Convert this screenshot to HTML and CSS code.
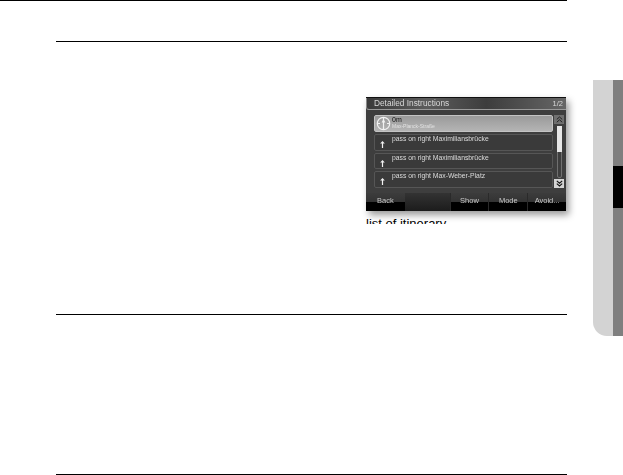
FILE: index.html
```html
<!DOCTYPE html>
<html lang="en">
<head>
    <meta charset="UTF-8">
    <title>list of itinerary</title>
    <link rel="stylesheet" href="styles.css">
</head>
<body>
    <div class="page">
        <div class="rule rule-top"></div>
        <div class="rule rule-sub"></div>

        <div class="figure-row">
            <div class="figure">
                <div class="device">
                    <div class="device-title">
                        <span>Detailed Instructions</span>
                        <span class="pager">1/2</span>
                    </div>
                    <div class="device-body">
                        <div class="list">
                            <div class="item item-active">
                                <svg class="compass" width="15" height="15" viewBox="0 0 15 15">
                                    <circle cx="7.5" cy="7.5" r="6.2" fill="none" stroke="#f2f2f2" stroke-width="1.2"/>
                                    <path d="M7.5 1.5V13.5M1.5 7.5H4M11 7.5H13.5" stroke="#f2f2f2" stroke-width="1.2"/>
                                    <path d="M7.5 3L5.6 6.5H9.4Z" fill="#f2f2f2"/>
                                </svg>
                                <div class="item-text">
                                    <div class="item-dist">0m</div>
                                    <div class="item-street">Max-Planck-Straße</div>
                                </div>
                            </div>
                            <div class="item">
                                <svg class="arrow" width="5" height="7" viewBox="0 0 5 7"><path d="M2.5 0L4.8 2.6H3.1V7H1.9V2.6H.2Z" fill="#f0f0f0"/></svg>
                                <div class="item-label">pass on right Maximiliansbrücke</div>
                            </div>
                            <div class="item">
                                <svg class="arrow" width="5" height="7" viewBox="0 0 5 7"><path d="M2.5 0L4.8 2.6H3.1V7H1.9V2.6H.2Z" fill="#f0f0f0"/></svg>
                                <div class="item-label">pass on right Maximiliansbrücke</div>
                            </div>
                            <div class="item">
                                <svg class="arrow" width="5" height="7" viewBox="0 0 5 7"><path d="M2.5 0L4.8 2.6H3.1V7H1.9V2.6H.2Z" fill="#f0f0f0"/></svg>
                                <div class="item-label">pass on right Max-Weber-Platz</div>
                            </div>
                        </div>
                        <div class="scroll">
                            <div class="scroll-btn scroll-up">
                                <svg width="7" height="7" viewBox="0 0 7 7"><path d="M.8 3.4L3.5 1L6.2 3.4M.8 6.2L3.5 3.8L6.2 6.2" fill="none" stroke="#222" stroke-width="1"/></svg>
                            </div>
                            <div class="scroll-track"><div class="scroll-thumb"></div></div>
                            <div class="scroll-btn scroll-down">
                                <svg width="7" height="7" viewBox="0 0 7 7"><path d="M.8 .8L3.5 3.2L6.2 .8M.8 3.6L3.5 6L6.2 3.6" fill="none" stroke="#111" stroke-width="1.1"/></svg>
                            </div>
                        </div>
                    </div>
                    <div class="device-foot">
                        <div class="soft-btn soft-back">Back</div>
                        <div class="soft-gap"></div>
                        <div class="soft-btn">Show</div>
                        <div class="soft-btn">Mode</div>
                        <div class="soft-btn">Avoid...</div>
                    </div>
                </div>
                <div class="caption">list of itinerary</div>
            </div>
        </div>

        <div class="rule rule-mid"></div>
        <div class="rule rule-end"></div>
    </div>

    <div class="side-tab">
        <div class="side-light"></div>
        <div class="side-dark"><div class="side-mark"></div></div>
    </div>
</body>
</html>
```

FILE: styles.css
```css
html, body {
    margin: 0;
    padding: 0;
    background-color: #ffffff;
    overflow: hidden;
}
body {
    font-family: "Liberation Sans", Arial, sans-serif;
    height: 475px;
}
.page {
    display: flex;
    flex-direction: column;
    width: 567px;
    height: 475px;
}
.rule {
    height: 1px;
    background-color: #000000;
    flex: none;
}
.rule-sub {
    margin-top: 40px;
    margin-left: 56px;
}
.rule-mid {
    margin-top: 90px;
    margin-left: 56px;
}
.rule-end {
    margin-top: 159px;
    margin-left: 56px;
}

.figure-row {
    display: flex;
    justify-content: flex-end;
    margin-top: 55px;
    height: 127px;
    flex: none;
}
.figure {
    width: 201px;
    height: 127px;
}
.device {
    width: 200px;
    height: 114px;
    display: flex;
    flex-direction: column;
    background-color: #3e3e3e;
    color: #e4e4e4;
    box-shadow: 3px 4px 7px rgba(0,0,0,0.4);
    border-top: 1px solid #111;
    box-sizing: border-box;
}
.device-title {
    display: flex;
    justify-content: space-between;
    align-items: center;
    height: 10px;
    padding: 0 3px 1px 7px;
    font-size: 8.3px;
    color: #d8d8d8;
    background: linear-gradient(90deg, #3a3a3a, #5c5c5c 30%, #3d3d3d 60%, #666666);
    border-bottom: 1px solid #9a9a9a;
    border-left: 1px solid #8a8a8a;
    border-bottom-left-radius: 3px;
    flex: none;
    filter: blur(0.4px);
}
.pager {
    font-size: 7.5px;
}
.device-body {
    display: flex;
    flex: 1;
    padding: 5px 2px 5px 8px;
    gap: 1px;
    min-height: 0;
}
.list {
    display: flex;
    flex-direction: column;
    gap: 2px;
    width: 179px;
}
.item {
    display: flex;
    height: 16px;
    align-items: flex-start;
    border: 1px solid #565656;
    border-radius: 2px;
    box-sizing: border-box;
    flex: 1;
    background-color: #3a3a3a;
    filter: blur(0.4px);
}
.item-active {
    background: linear-gradient(#9a9a9a, #b4b4b4);
    border-color: #c4c4c4;
    color: #111;
}
.compass {
    margin: 0 1px 0 1px;
    flex: none;
}
.item-dist {
    font-size: 7px;
    line-height: 7px;
    color: #111111;
}
.item-street {
    font-size: 5px;
    line-height: 7px;
    color: #e2e2e2;
}
.arrow {
    margin: 6px 7px 0 5px;
    flex: none;
}
.item-label {
    font-size: 6.8px;
    line-height: 7px;
    color: #dcdcdc;
}
.scroll {
    display: flex;
    flex-direction: column;
    align-items: center;
    width: 10px;
    flex: none;
}
.scroll-btn {
    width: 10px;
    height: 9px;
    display: flex;
    align-items: center;
    justify-content: center;
    flex: none;
}
.scroll-up {
    background-color: #6f6f6f;
}
.scroll-down {
    background-color: #d4d4d4;
}
.scroll-track {
    flex: 1;
    width: 5px;
    margin: 2px 0 1px;
    border: 1px solid #707070;
    border-radius: 2px;
    box-sizing: border-box;
}
.scroll-thumb {
    height: 26px;
    margin: -1px;
    background-color: #e6e6e6;
}
.device-foot {
    display: flex;
    height: 18px;
    flex: none;
    background-color: #2a2a2a;
}
.soft-btn {
    width: 38px;
    margin-left: 1px;
    font-size: 7.5px;
    line-height: 15px;
    text-align: center;
    color: #c8c8c8;
    background: linear-gradient(#3c3c3c, #333333 48%, #000000 52%, #000000);
    filter: blur(0.4px);
}
.soft-back {
    margin-left: 0;
    width: 39px;
}
.soft-gap {
    width: 45px;
    background: linear-gradient(#333333, #1c1c1c);
}
.caption {
    margin-top: 5px;
    height: 8px;
    overflow: hidden;
    font-size: 13px;
    line-height: 15px;
    color: #000000;
}

.side-tab {
    position: absolute;
    left: 593px;
    top: 80px;
    width: 30px;
    height: 256px;
    display: flex;
    overflow: hidden;
    border-bottom-left-radius: 14px;
}
.side-light {
    width: 20px;
    background-color: #d3d3d3;
}
.side-dark {
    width: 10px;
    background-color: #7f7f7f;
    padding-top: 86px;
    box-sizing: border-box;
}
.side-mark {
    height: 42px;
    background-color: #000000;
}
```
